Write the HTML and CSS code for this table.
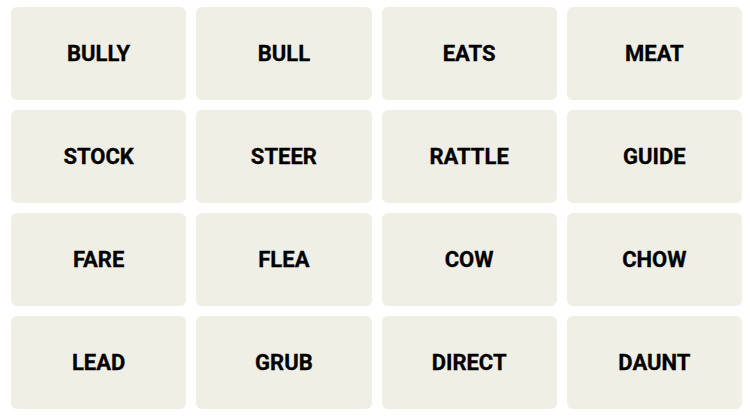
FILE: index.html
```html
<!DOCTYPE html>
<html>
<head>
<meta charset="utf-8">
<link rel="stylesheet" href="styles.css">
</head>
<body>
<div class="board">
  <div class="tile">BULLY</div>
  <div class="tile">BULL</div>
  <div class="tile">EATS</div>
  <div class="tile">MEAT</div>
  <div class="tile">STOCK</div>
  <div class="tile">STEER</div>
  <div class="tile">RATTLE</div>
  <div class="tile">GUIDE</div>
  <div class="tile">FARE</div>
  <div class="tile">FLEA</div>
  <div class="tile">COW</div>
  <div class="tile">CHOW</div>
  <div class="tile">LEAD</div>
  <div class="tile">GRUB</div>
  <div class="tile">DIRECT</div>
  <div class="tile">DAUNT</div>
</div>
</body>
</html>
```

FILE: styles.css
```css
html, body {
  margin: 0;
  padding: 0;
  background: #ffffff;
}
body {
  padding: 7px 0 0 11px;
}
.board {
  width: 731px;
  display: grid;
  grid-template-columns: repeat(4, 1fr);
  grid-auto-rows: 93px;
  gap: 10px;
}
.tile {
  background: #efefe6;
  border-radius: 6px;
  display: flex;
  align-items: center;
  justify-content: center;
  font-family: Roboto, "Liberation Sans", sans-serif;
  font-weight: 700;
  font-size: 22px;
  color: #000;
  text-transform: uppercase;
  -webkit-text-stroke: 0.3px #000;
}
```
